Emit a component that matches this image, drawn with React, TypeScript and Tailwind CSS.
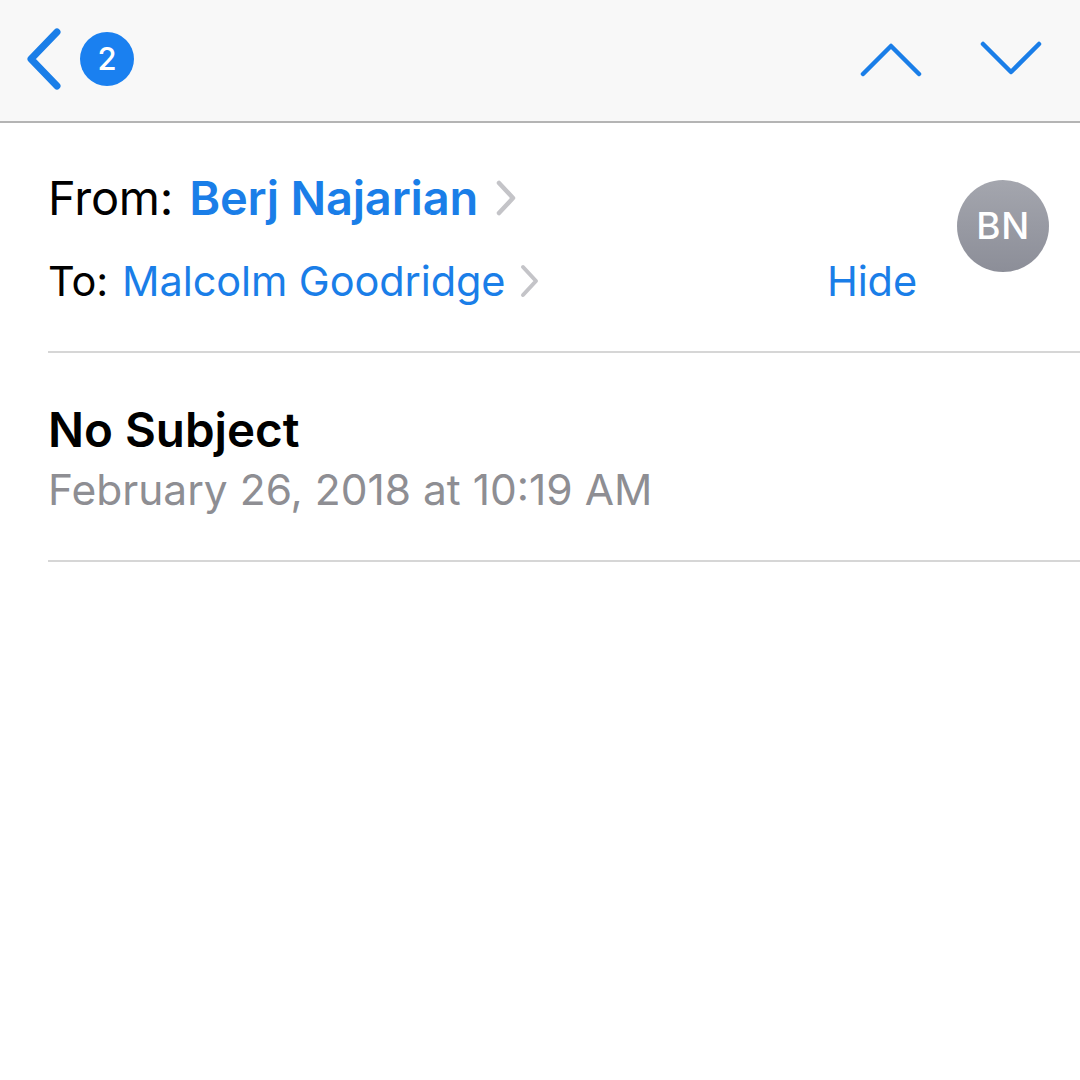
import React from "react";

const BLUE = "#1a7ee8";

export default function App() {
  return (
    <div className="w-[1080px] h-[1080px] bg-white overflow-hidden" style={{ fontFamily: "Inter, 'Noto Sans', sans-serif" }}>
      {/* Top nav bar */}
      <div className="h-[123px] bg-[#f8f8f8] border-b-2 border-[#b4b4b4] flex items-center pl-[24px] pr-[38px]">
        <div className="flex items-center gap-[16px] -mt-[4px]">
          <svg width="40" height="64" viewBox="0 0 40 64" className="block">
            <polyline points="33,5 7,32 33,59" fill="none" stroke="#1a7ee8" strokeWidth="7" strokeLinecap="round" strokeLinejoin="round" />
          </svg>
          <div className="w-[54px] h-[54px] rounded-full bg-[#1a80f0] flex items-center justify-center text-white text-[31px] font-medium leading-none">
            2
          </div>
        </div>
        <div className="flex-1" />
        <div className="flex items-center gap-[58px] -mt-[4px]">
          <svg width="62" height="36" viewBox="0 0 62 36" className="block">
            <polyline points="3,33 31,5 59,33" fill="none" stroke="#1a7ee8" strokeWidth="4.5" strokeLinecap="round" strokeLinejoin="round" />
          </svg>
          <svg width="62" height="36" viewBox="0 0 62 36" className="block">
            <polyline points="3,3 31,31 59,3" fill="none" stroke="#1a7ee8" strokeWidth="4.5" strokeLinecap="round" strokeLinejoin="round" />
          </svg>
        </div>
      </div>

      {/* Header: From / To */}
      <div className="flex pl-[48px] pr-[31px] pt-[47px]">
        <div className="flex-1 flex flex-col">
          <div className="flex items-center h-[56px] text-[47px] tracking-[-0.2px]">
            <span className="text-black">From:</span>
            <span className="ml-[16px] font-semibold" style={{ color: BLUE }}>Berj Najarian</span>
            <svg width="24" height="38" viewBox="0 0 24 38" className="ml-[16px] block">
              <polyline points="5,4 19,19 5,34" fill="none" stroke="#c4c4c8" strokeWidth="4.5" strokeLinecap="round" strokeLinejoin="round" />
            </svg>
          </div>
          <div className="flex items-center h-[52px] mt-[29px] text-[41.5px] tracking-[-0.1px]">
            <span className="text-black">To:</span>
            <span className="ml-[14px]" style={{ color: BLUE }}>Malcolm Goodridge</span>
            <svg width="24" height="36" viewBox="0 0 24 36" className="ml-[13px] block">
              <polyline points="5,4 18,18 5,32" fill="none" stroke="#c4c4c8" strokeWidth="4" strokeLinecap="round" strokeLinejoin="round" />
            </svg>
            <div className="flex-1" />
            <span style={{ color: BLUE }}>Hide</span>
          </div>
        </div>
        <div className="ml-[40px] mt-[10px] w-[92px] h-[92px] rounded-full bg-gradient-to-b from-[#a4a6ae] to-[#8c8e98] flex items-center justify-center text-white text-[37px] font-medium tracking-[0.5px]">
          BN
        </div>
      </div>

      <div className="ml-[48px] mt-[44px] border-b-2 border-[#d6d6d6]" />

      {/* Subject */}
      <div className="pl-[48px] pt-[48px] pb-[43px]">
        <div className="text-[47.5px] font-semibold text-black leading-[58px]">No Subject</div>
        <div className="text-[42.5px] text-[#8e8e93] leading-[54px] mt-[4px]">February 26, 2018 at 10:19 AM</div>
      </div>

      <div className="ml-[48px] border-b-2 border-[#d6d6d6]" />
    </div>
  );
}
